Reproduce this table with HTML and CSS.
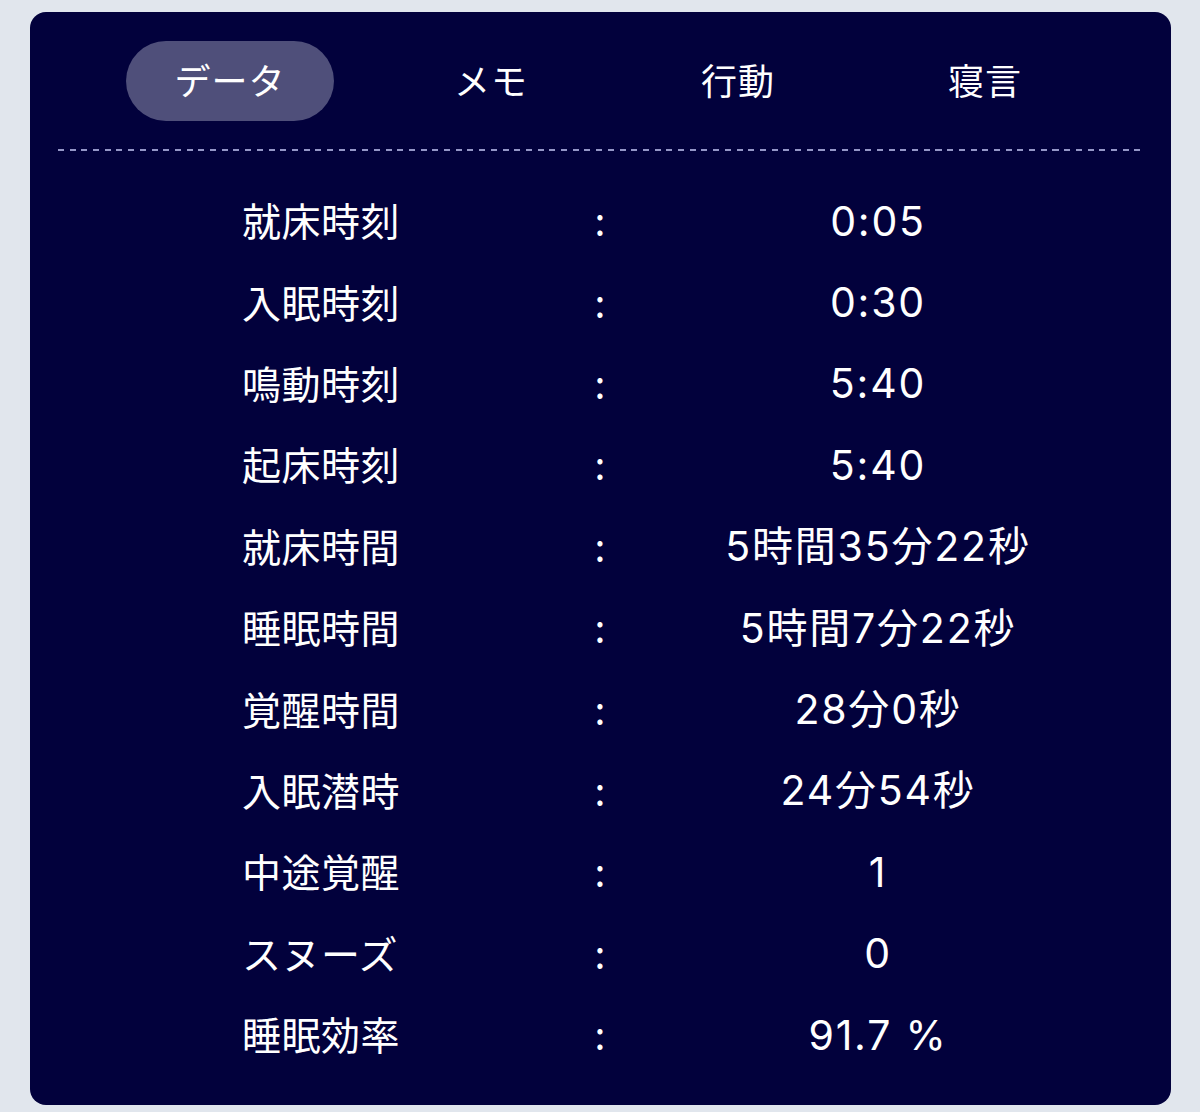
FILE: index.html
```html
<!DOCTYPE html>
<html lang="ja">
<head>
<meta charset="utf-8">
<link rel="stylesheet" href="styles.css">
</head>
<body>
<div class="card">
  <div class="tabs">
    <div class="tab active">データ</div>
    <div class="tab">メモ</div>
    <div class="tab">行動</div>
    <div class="tab">寝言</div>
  </div>
  <div class="divider"></div>
  <div class="rows">
    <div class="row"><span class="label">就床時刻</span><span class="colon">:</span><span class="value">0:05</span></div>
    <div class="row"><span class="label">入眠時刻</span><span class="colon">:</span><span class="value">0:30</span></div>
    <div class="row"><span class="label">鳴動時刻</span><span class="colon">:</span><span class="value">5:40</span></div>
    <div class="row"><span class="label">起床時刻</span><span class="colon">:</span><span class="value">5:40</span></div>
    <div class="row"><span class="label">就床時間</span><span class="colon">:</span><span class="value">5時間35分22秒</span></div>
    <div class="row"><span class="label">睡眠時間</span><span class="colon">:</span><span class="value">5時間7分22秒</span></div>
    <div class="row"><span class="label">覚醒時間</span><span class="colon">:</span><span class="value">28分0秒</span></div>
    <div class="row"><span class="label">入眠潜時</span><span class="colon">:</span><span class="value">24分54秒</span></div>
    <div class="row"><span class="label">中途覚醒</span><span class="colon">:</span><span class="value">1</span></div>
    <div class="row"><span class="label">スヌーズ</span><span class="colon">:</span><span class="value">0</span></div>
    <div class="row"><span class="label">睡眠効率</span><span class="colon">:</span><span class="value">91.7 %</span></div>
  </div>
</div>
</body>
</html>
```

FILE: styles.css
```css
html, body {
  margin: 0;
  padding: 0;
  background: #e1e6ed;
}
body {
  padding: 12px 29px 7px 30px;
  font-family: "Noto Sans CJK JP", "Noto Sans", sans-serif;
  color: #ffffff;
}
.card {
  background: #02013c;
  border-radius: 16px;
  padding: 29px 28px 29px 28px;
  height: 1093px;
  box-sizing: border-box;
}
.tabs {
  display: flex;
  padding-left: 68px;
  gap: 39px;
}
.tab {
  width: 208px;
  height: 80px;
  display: flex;
  align-items: center;
  justify-content: center;
  font-size: 36px;
  font-weight: 400;
  letter-spacing: 1px;
  border-radius: 40px;
  padding-bottom: 5px;
  box-sizing: border-box;
}
.tab.active {
  background: #4f4f7a;
  margin-right: 14px;
}
.divider {
  margin-top: 28px;
  height: 2px;
  background: repeating-linear-gradient(90deg, #9597c8 0 6px, transparent 6px 11.7px);
}
.rows {
  margin-top: 28px;
}
.row {
  display: grid;
  grid-template-columns: 320px 76px 480px;
  padding-left: 184px;
  height: 81.4px;
  align-items: center;
  font-size: 39px;
  font-weight: 400;
  line-height: 1;
}
.label {
  letter-spacing: 0.5px;
}
.colon {
  text-align: center;
}
.value {
  text-align: center;
  font-family: "Inter", "Noto Sans CJK JP", sans-serif;
  font-size: 41px;
  letter-spacing: 1.8px;
  padding-top: 3px;
}
```
